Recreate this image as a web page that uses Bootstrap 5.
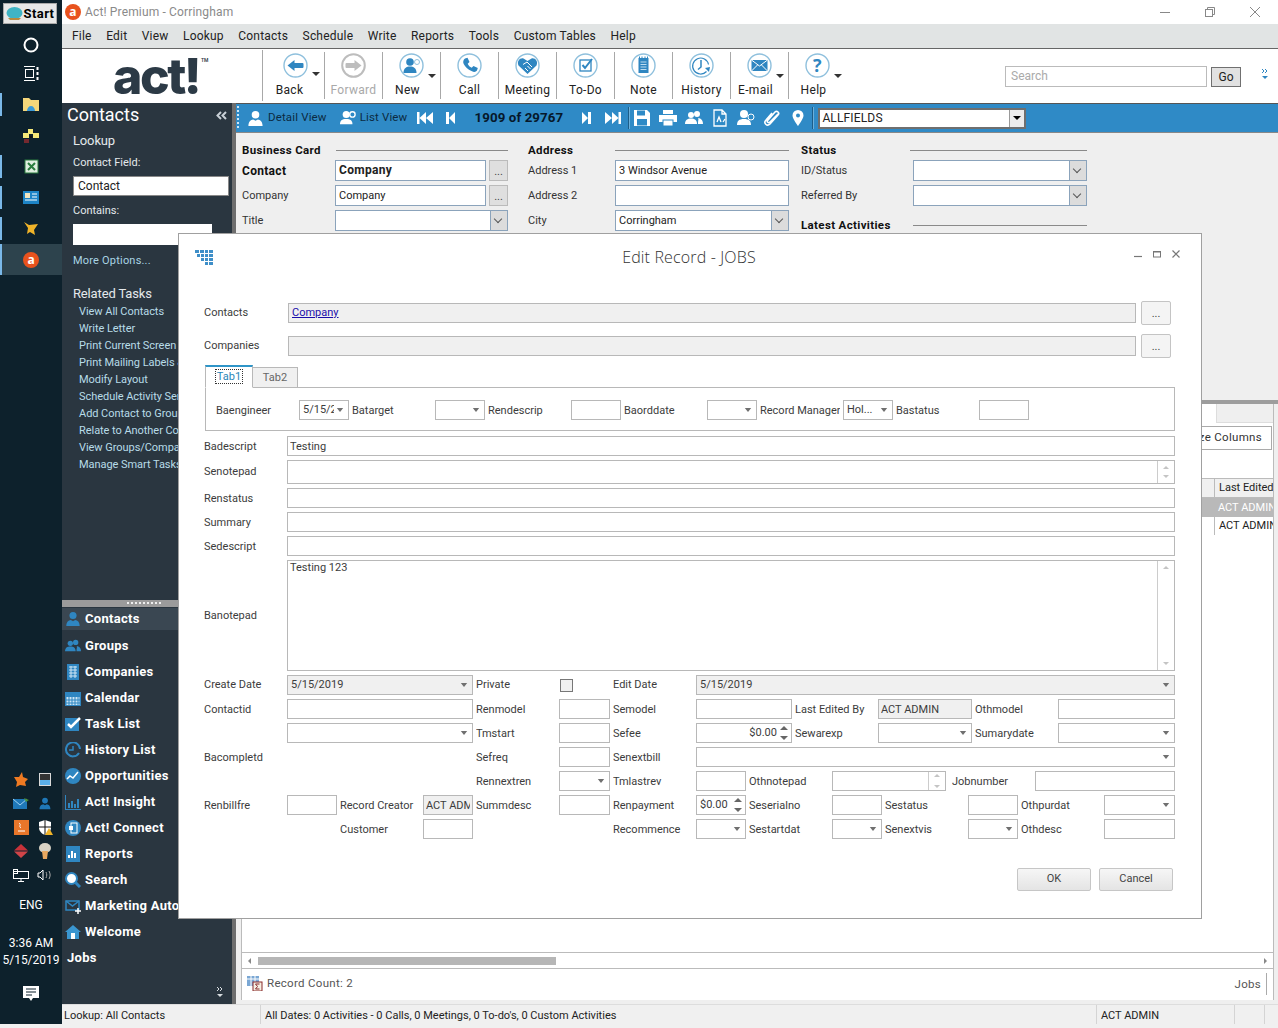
<!DOCTYPE html>
<html lang="en">
  <head>
    <meta charset="UTF-8" />
    <title>Act! Premium - Corringham</title>
    <link href="https://cdn.jsdelivr.net/npm/bootstrap@5.3.3/dist/css/bootstrap.min.css" rel="stylesheet" />
    <style>
      html, body { height: 1024px; }
      body { font-family: Roboto, "Noto Sans", sans-serif; font-size: 11px; color: #3c3c3c; background: #f0f0f0; overflow: hidden; position: relative; }

      /* windows taskbar */
      .taskbar { width: 62px; flex: none; background: #0d212c; color: #fff; }
      .start-btn { margin: 3px 5px 0 3px; height: 21px; padding: 0; font-size: 13px; font-weight: 700; letter-spacing: .4px; color: #000; background: #e8e8e8; border: 1px solid #aaa; border-radius: 0; gap: 1px; }
      .tb-item { height: 31px; position: relative; }
      .tb-first { height: 27px; margin-top: 7px; }
      .tb-item.open::before { content: ""; position: absolute; left: 0; top: 4px; bottom: 4px; width: 2px; background: #7ab8e8; }
      .tb-item.active { background: #2d434d; }
      .tb-item.active::before { top: 0; bottom: 0; }
      .tray { margin-bottom: 9px; }
      .tray-grid { display: grid; grid-template-columns: 24px 24px; grid-auto-rows: 24px; justify-items: center; align-items: center; margin-left: 4px; }
      .tray-text { font-size: 12px; line-height: 17px; }
      .eng { margin: 10px 0 21px; }
      .notif { margin: 17px 0 13px; }

      /* act window chrome */
      .app { min-width: 0; }
      .titlebar { height: 24px; background: #fff; flex: none; color: #8a8a8a; font-size: 12px; letter-spacing: .15px; padding-left: 3px; }
      .win-ctl { gap: 33px; padding-right: 17px; }
      .menubar { height: 25px; flex: none; background: #e1e4e4; border-bottom: 1px solid #666; padding: 0 0 0 10px; font-size: 12px; color: #222; letter-spacing: .2px; gap: 14.500px; }
      .toolbar { height: 54px; flex: none; background: #fff; }
      .logo-slot { width: 200px; flex: none; position: relative; padding-left: 51px; }
      .logo { font-family: Inter, "Liberation Sans", sans-serif; font-weight: 800; font-size: 50px; line-height: 44px; letter-spacing: -2.5px; color: #2c3a46; margin: 0; }
      .logo-tm { position: absolute; left: 139px; top: 9px; font-size: 5px; line-height: 5px; font-weight: 600; color: #2c3a46; }
      .tool { width: 58px; flex: none; position: relative; border-left: 1px solid #a8a8a8; margin: 3px 0 4px; padding-top: 1px; font-size: 12px; color: #222; letter-spacing: .3px; text-align: center; }
      .tool-first { width: 62px; margin: 1px 0 2px; padding-top: 3px; }
      .tool-first svg { left: 2px; position: relative; }
      .tool svg { display: block; margin: 0 auto; width: 25px; height: 25px; }
      .tool div { margin-top: 5px; line-height: 14px; }
      .tool.off { color: #a9a9a9; }
      .tool.drop div { padding-right: 8px; }
      .tool.drop::after { content: ""; position: absolute; right: 4px; top: 22px; border: 4px solid transparent; border-top-color: #333; border-bottom: 0; }
      .search-box { width: 202px; height: 21px; border: 1px solid #bbb; border-radius: 0; padding: 0 5px; font-size: 12px; font-family: inherit; min-height: 0; }
      .search-box::placeholder { color: #aaa; }
      .go-btn { height: 20px; width: 30px; padding: 0; font-size: 12px; background: #e1e1e1; border: 1px solid #707070; border-radius: 0; color: #222; margin: 1px 0 0 4px; }
      .more-btn { margin: 0 9px 6px 20px; }
      .work { min-height: 0; }

      /* left navigation */
      .sidebar { width: 170px; flex: none; background: #2a3640; color: #e4e9ec; overflow: hidden; }
      .side-top { height: 497px; flex: none; white-space: nowrap; padding: 0 3px 0 11px; position: relative; }
      .side-title { font-size: 18px; line-height: 24px; color: #fff; margin: 0 0 4px -6px; display: flex; justify-content: space-between; padding-right: 2px; }
      .side-h { font-size: 13px; line-height: 20px; letter-spacing: -.15px; }
      .side-h.rel { line-height: 22px; margin-bottom: -2px; }
      .side-l { font-size: 11px; line-height: 18px; margin-bottom: -2px; }
      .m3 { margin-top: 3px; } .m6 { margin-top: 6px; } .m7 { margin-top: 7px; } .m15 { margin-top: 15px; }
      .side-input { height: 20px; background: #fff; color: #222; font-size: 12px; padding: 0 4px; line-height: 18px; border: 1px solid #888; }
      .contains { width: 139px; height: 21px; border: 0; }
      .side-link { display: block; color: #b8dce8; font-size: 11px; line-height: 17px; margin-left: 6px; text-decoration: none; letter-spacing: -.05px; }
      .more-opts { color: #a9d4e4; font-size: 11px; letter-spacing: .2px; line-height: 18px; margin-bottom: -2px; }
      .side-split { height: 7px; flex: none; background: #9b9b9b; position: relative; }
      .side-split::after { content: ""; position: absolute; left: 65px; top: 2px; width: 36px; height: 2px; background: repeating-linear-gradient(90deg, #eee 0 2px, transparent 2px 4px); }
      .nav-row { height: 26px; flex: none; padding-left: 3px; font-size: 13px; font-weight: 700; color: #fff; gap: 4px; white-space: nowrap; letter-spacing: .3px; }
      .nav-row.on { background: #3a4752; height: 22px; margin: 1px 0 3px; }
      .nav-row svg { width: 16px; height: 16px; flex: none; }
      .nav-jobs { padding-left: 5px; }
      .side-foot { padding: 0 8px 7px 0; line-height: 8px; }

      /* main view */
      .main-area { min-width: 0; background: #efefef; border-left: 4px solid #6e6e6e; }
      .viewbar { height: 30px; flex: none; background: #2f8ac6; border-top: 1px solid #555; border-bottom: 1px solid #888; color: #0c2a42; font-size: 11.500px; white-space: nowrap; letter-spacing: .15px; }
      .grip { width: 2px; height: 24px; margin: 0 8px 0 1px; background: repeating-linear-gradient(#cfe6f5 0 2px, transparent 2px 4px); }
      .mr13 { margin-right: 13px; } .ml10 { margin-left: 10px; } .ml13 { margin-left: 13px; } .ml14 { margin-left: 14px; } .ml7 { margin-left: 7px; }
      .vb-ico { width: 26px; flex: none; text-align: center; }
      .vb-ico svg { width: 18px; height: 18px; display: block; margin: 0 auto; }
      .vb-sep { width: 2px; height: 22px; background: #1c5d88; border-right: 1px solid #6cb0db; flex: none; margin-right: -1px; }
      .vb-sep2 { margin: 0 0 0 1px; }
      .rec-pos { font-size: 13.300px; font-weight: 700; color: #06182a; width: 127px; flex: none; text-align: center; letter-spacing: .1px; }
      .vb-select { width: 208px; height: 21px; margin-left: 4px; background: #fff; border: 2px solid #6f6f6f; color: #222; padding-left: 2px; line-height: 17px; font-size: 12px; }
      .vb-select i { width: 15px; height: 17px; background: #ececec; border-left: 1px solid #999; position: relative; }
      .vb-select i::after { content: ""; position: absolute; left: 3px; top: 6px; border: 4px solid transparent; border-top-color: #000; border-bottom: 0; }
      .detail { height: 267px; flex: none; padding: 10px 0 0 6px; gap: 20px; overflow: hidden; }
      .d-col { flex: none; }
      .c1 { width: 266px; } .c2 { width: 261px; margin-right: -8px; } .c3 { width: 286px; }
      .d-head { height: 14px; margin-bottom: 1px; font-size: 11.500px; font-weight: 700; color: #111; line-height: 14px; letter-spacing: .35px; }
      .d-head hr { flex: 1; margin: 0; border-top: 1px solid #8a8a8a; opacity: 1; }
      .d-row { height: 25px; font-size: 11px; color: #333; }
      .d-row.strong { font-size: 12px; font-weight: 700; color: #111; letter-spacing: .3px; }
      .d-row label { width: 93px; flex: none; }
      .d-row:not(.strong) label { padding-top: 2px; }
      .c3 .d-row label, .c3 .d-head span { width: 112px; flex: none; }
      .c3 .d-head.status span { width: 109px; }
      .c2 .d-row label, .c2 .d-head span { width: 87px; flex: none; }
      .c1 .d-head span { width: 94px; flex: none; }
      .latest { margin-top: 10px; }
      .d-box { height: 21px; flex: 1; background: #fff; border: 1px solid #8ba3bb; padding: 0 3px; line-height: 19px; min-width: 0; color: #222; }
      .d-box i { width: 17px; height: 19px; margin: 0 -3px 0 auto; background: #dcdcdc; border-left: 1px solid #8ba3bb; display: block; position: relative; }
      .d-box i::after { content: ""; position: absolute; left: 4px; top: 5px; width: 6px; height: 6px; border: solid #555; border-width: 0 1px 1px 0; transform: rotate(45deg); }
      .d-btn { width: 19px; height: 21px; margin-left: 3px; padding: 0; border: 1px solid #bbb; background: #dfdfdf; border-radius: 0; color: #444; font-size: 11px; line-height: 21px; flex: none; }
      .split-h { height: 4px; flex: none; background: #9d9d9d; }
      .grid-panel { background: #fff; margin: 0 4px 0 5px; min-height: 0; border-left: 1px solid #bbb; border-right: 1px solid #bbb; }
      .gp-tabs { height: 19px; flex: none; background: #fff; }
      .gp-tabs div { width: 57px; height: 100%; background: #efefef; border-left: 1px solid #ddd; border-bottom: 1px solid #ddd; }
      .gp-bar { height: 55px; flex: none; padding: 3px 1px 0 0; }
      .cust-btn { width: 120px; height: 24px; border: 1px solid #aaa; background: #fff; font-size: 11.500px; padding: 0 9px 0 0; text-align: right; color: #333; border-radius: 0; letter-spacing: .3px; white-space: nowrap; }
      .gp-table { font-size: 11px; }
      .gp-row { height: 18px; line-height: 18px; color: #222; justify-content: flex-end; white-space: nowrap; overflow: hidden; }
      .gp-row span { width: 59px; flex: none; padding-left: 4px; border-left: 1px solid #bbb; overflow: hidden; }
      .gp-row.head { height: 20px; line-height: 18px; background: #f0f0f0; border-top: 1px solid #bbb; border-bottom: 1px solid #bbb; }
      .gp-row.sel { height: 19px; line-height: 20px; background: #b9b9b9; color: #fff; }
      .gp-row.sel span { border-left: 0; }
      .gp-scroll { height: 17px; flex: none; border-top: 1px solid #bbb; border-bottom: 1px solid #bbb; padding: 0 6px; }
      .gp-scroll b { width: 298px; height: 8px; background: #b6b6b6; margin-left: 7px; display: block; }
      .gp-scroll i { border: 3px solid transparent; }
      .arr-l { border-right-color: #888 !important; border-left: 0 !important; }
      .arr-r { border-left-color: #888 !important; border-right: 0 !important; margin-left: auto; }
      .count-bar { height: 31px; flex: none; padding: 0 6px 2px 5px; color: #555; font-size: 11.500px; letter-spacing: .3px; }
      .count-bar .jobs { border-right: 1px solid #aaa; padding-right: 5px; height: 22px; line-height: 22px; }
      .main-gap { height: 4px; flex: none; }
      .statusbar { height: 20px; flex: none; background: #f0f0f0; border-top: 1px solid #ddd; font-size: 11px; color: #222; white-space: nowrap; }
      .statusbar div { line-height: 21px; padding-left: 4px; border-right: 1px solid #d4d4d4; }
      .s1 { width: 199px; padding-left: 2px !important; } .s2 { width: 836px; } .s3 { width: 138px; } .s4 { width: 30px; }

      /* edit record dialog */
      .edit-dlg { position: absolute; left: 178px; top: 233px; width: 1024px; height: 686px; border-radius: 0; border: 1px solid #a0a0a0; background: #fff; padding: 0 26px 0 25px; }
      .dlg-head { height: 67px; flex: none; position: relative; }
      .dlg-icon { position: absolute; left: -9px; top: 16px; width: 18px; height: 15px; }
      .dlg-title { position: absolute; left: 0; right: 0; top: 12px; text-align: center; font-family: "Open Sans", sans-serif; font-weight: 300; font-size: 16px; line-height: 22px; color: #333; letter-spacing: .15px; padding-right: 1px; }
      .dlg-ctl { position: absolute; right: -5px; top: 16px; gap: 11px; }
      .dlg-row { gap: 3px; flex: none; height: 20px; margin-bottom: 4px; font-size: 11px; color: #3c3c3c; white-space: nowrap; }
      .lb { width: 80px; flex: none; overflow: hidden; line-height: 22px; }
      .lb-wide { width: 81px; }
      .fld { display: block; height: 20px; min-height: 0; padding: 0 2px; border: 1px solid #b8b8b8; border-radius: 0; font-size: 11px; font-family: inherit; color: #3c3c3c; background-color: #fff; flex: none; width: auto; line-height: 18px; resize: none; }
      textarea.fld { min-height: 0; }
      .fld:focus { box-shadow: none; border-color: #b8b8b8; }
      .form-select.fld { padding: 0 14px 0 3px; background-image: url("data:image/svg+xml,%3Csvg xmlns='http://www.w3.org/2000/svg' viewBox='0 0 8 5'%3E%3Cpath d='M0 0h8L4 5z' fill='%23707070'/%3E%3C/svg%3E"); background-position: right 4px center; background-size: 8px 4px; }
      .ro { background-color: #f0f0f0; }
      .grow { flex: 1 1 0; min-width: 0; }
      .f50 { width: 50px; } .f51 { width: 51px; } .f94 { width: 94px; } .f96 { width: 96px; }
      .f114 { width: 114px; flex: none; } .f186 { width: 186px; }
      .s269 { width: 269px; flex: none; }
      .s133 { width: 133px; flex: none; }
      .s134 { width: 134px; flex: none; }
      .s80 { width: 80px; flex: none; }
      .s186 { width: 186px; flex: none; }
      .s51 { width: 51px; flex: none; }
      .job-lb { margin-left: 3px; }
      .dots { width: 30px; height: 24px; padding: 0; border: 1px solid #c4c4c4; border-radius: 2px; background: #f4f4f4; color: #444; font-size: 11px; flex: none; margin: 0 4px 0 2px; line-height: 24px; }
      .pick-row { height: 24px; margin-bottom: 9px; }
      .pick-row .fld { background: #f0f0f0; padding: 0 3px; }
      .pick-row a { color: #1a0dab; }
      .dlg-tabs { margin: -2px 0 0 1px; height: 23px; border-bottom: 1px solid #b8b8b8; font-size: 11px; flex: none; }
      .dlg-tabs .nav-link { padding: 0; border-radius: 0; height: 21px; margin-top: 2px; margin-bottom: -1px; width: 45px; text-align: center; color: #666; background: #f0f0f0; border: 1px solid #b8b8b8; line-height: 20px; border-left: 0; }
      .dlg-tabs .nav-link.active { width: 48px; height: 23px; margin-top: 0; color: #2a86b8; background: #fff; border: 1px solid #b8b8b8; border-top: 2px solid #2f95c8; border-bottom-color: #fff; }
      .dlg-tabs .nav-link.active span { border: 1px dotted #333; padding: 0 1px; }
      .tab-pane-box { margin: 0 0 5px 1px; height: 43px; flex: none; border: 1px solid #b8b8b8; border-top: 0; padding: 12px 0 0 10px; }
      .tall { height: 24px; }
      .tall .fld, .note .fld { height: 100%; }
      .note { height: 111px; }
      .note textarea { padding: 0 2px; line-height: 14px; }
      .vscroll { width: 17px; flex: none; border-left: 1px solid #ccc; position: absolute; right: 1px; top: 1px; bottom: 1px; background: #fff; }
      .vscroll::before, .vscroll::after { content: ""; position: absolute; left: 5px; border: 3px solid transparent; }
      .vscroll::before { top: 5px; border-bottom-color: #c4c4c4; border-top: 0; }
      .vscroll::after { bottom: 5px; border-top-color: #c4c4c4; border-bottom: 0; }
      .f114 .vscroll::before { top: 2px; }
      .f114 .vscroll::after { bottom: 2px; }
      .spin { position: relative; height: 20px; flex: none; border: 1px solid #b8b8b8; background: #fff; padding: 0 14px 0 3px; line-height: 18px; }
      .spin::before, .spin::after { content: ""; position: absolute; right: 3px; border: 4px solid transparent; }
      .spin::before { top: 2px; border-bottom-color: #666; border-top: 0; }
      .spin::after { bottom: 2px; border-top-color: #666; border-bottom: 0; }
      .form-check-input.chk { width: 13px; height: 13px; margin: 0 0 0 1px; border: 1px solid #777; border-radius: 0; background-color: #f0f0f0; flex: none; }
      .dlg-foot { margin-top: 25px; gap: 8px; padding-right: 2px; }
      .dlg-btn { width: 74px; height: 23px; padding: 0; font-size: 11px; color: #444; border: 1px solid #c6c6c6; border-radius: 2px; background: linear-gradient(#f6f6f6, #e4e4e4); }
    </style>
  </head>
  <body class="d-flex">
    <svg width="0" height="0" class="position-absolute">
      <defs>
        <symbol id="ring" viewBox="0 0 25 25"><circle cx="12.500" cy="12.500" r="11.500" fill="#fff" stroke="#8fc0dd" stroke-width="1.400" /></symbol>
        <symbol id="person" viewBox="0 0 18 18"><circle cx="9" cy="5" r="4" /><path d="M1.500 17c0-5 2.500-6.500 5-7l2.500 1.500L11.500 10c2.500.5 5 2 5 7z" /></symbol>
        <symbol id="people" viewBox="0 0 18 18"><circle cx="6" cy="6" r="3" /><path d="M0 15c0-4 2.500-5.500 6-5.500s6 1.500 6 5.500z" /><circle cx="12" cy="5" r="3" /><path d="M13 15h5c0-4-2-5.500-5-6 1 1 0 2 0 6z" /></symbol>
      </defs>
    </svg>

    <aside class="taskbar d-flex flex-column">
      <button class="btn start-btn d-flex align-items-center justify-content-center" type="button">
        <svg width="17" height="13" viewBox="0 0 17 13"><ellipse cx="8.500" cy="6" rx="8" ry="6" fill="#3fb4c4" /><path d="M2 11h13l-2 2H4z" fill="#b88a3e" /></svg>Start
      </button>
      <div class="tb-item tb-first d-flex align-items-center justify-content-center"><svg width="18" height="18" viewBox="0 0 18 18"><circle cx="9" cy="9" r="6.500" fill="none" stroke="#fff" stroke-width="2" /></svg></div>
      <div class="tb-item d-flex align-items-center justify-content-center"><svg width="17" height="17" viewBox="0 0 17 17" fill="none" stroke="#fff"><path d="M1 1.500h11M1 15.500h11" /><rect x="2.500" y="4.500" width="8" height="8" /><path d="M14.500 2v3M14.500 7v3M14.500 12v3" stroke-width="2" /></svg></div>
      <div class="tb-item open d-flex align-items-center justify-content-center"><svg width="18" height="15" viewBox="0 0 18 15"><path d="M1 1h6l2 2h8v11H1z" fill="#f5d77a" /><path d="M5 14c0-3 2-5 4-5s4 2 4 5z" fill="#3a9ad8" /></svg></div>
      <div class="tb-item d-flex align-items-center justify-content-center"><svg width="16" height="14" viewBox="0 0 16 14"><rect x="5" y="0" width="5" height="5" fill="#f5e878" /><rect x="0" y="4" width="6" height="5" fill="#f5e878" /><rect x="10" y="4" width="6" height="5" fill="#f5e878" /><path d="M1 11h5M1 13h5" stroke="#d33" /><rect x="7" y="7" width="2" height="2" fill="#111" /></svg></div>
      <div class="tb-item open d-flex align-items-center justify-content-center"><svg width="15" height="15" viewBox="0 0 15 15"><rect x="1" y="1" width="13" height="13" fill="#dfeee0" stroke="#2a7d3f" /><path d="M4 4l7 7M11 4l-7 7" stroke="#2a7d3f" stroke-width="2" /></svg></div>
      <div class="tb-item open d-flex align-items-center justify-content-center"><svg width="16" height="14" viewBox="0 0 16 14"><rect width="16" height="13" fill="#1d84c6" /><rect x="2" y="2" width="5" height="5" fill="#f1e5c0" /><path d="M9 3h5M9 6h5M2 9h12" stroke="#fff" /></svg></div>
      <div class="tb-item open d-flex align-items-center justify-content-center"><svg width="16" height="15" viewBox="0 0 16 15"><path d="M1 1l5 3 9-1-4 6 1 5-5-3-3 2 1-6z" fill="#f0b429" /></svg></div>
      <div class="tb-item open active d-flex align-items-center justify-content-center"><svg width="16" height="16" viewBox="0 0 16 16"><circle cx="8" cy="8" r="8" fill="#e8521d" /><text x="8" y="12" text-anchor="middle" fill="#fff" font-size="12" font-weight="700" font-family="Open Sans, sans-serif">a</text></svg></div>
      <div class="tray mt-auto d-flex flex-column align-items-center">
        <div class="tray-grid">
          <svg width="16" height="15" viewBox="0 0 16 15"><path d="M1 5l5 0 3-5 1 5 5 2-3 3 1 4-6-1-4 2 1-5z" fill="#ef7a22" /></svg>
          <svg width="12" height="13" viewBox="0 0 12 13"><rect width="12" height="13" fill="#d9d9d9" /><rect x="1" y="1" width="10" height="6" fill="#333" /><rect x="1" y="7" width="10" height="5" fill="#5aaee8" /></svg>
          <svg width="16" height="11" viewBox="0 0 16 11"><rect width="14" height="10" y="1" fill="#1f78b8" /><path d="M0 1l7 6 7-6" stroke="#9fd0ef" fill="none" /><path d="M11 0l5 2-3 2z" fill="#4a8f3a" /></svg>
          <svg width="16" height="13" viewBox="0 0 18 18" fill="#1f78b8"><use href="#person" /></svg>
          <svg width="15" height="15" viewBox="0 0 15 15"><rect width="15" height="15" fill="#e8762a" /><path d="M4 11h7M5 3c3 2-1 3 2 5" stroke="#fff" fill="none" /></svg>
          <svg width="15" height="15" viewBox="0 0 15 15"><path d="M1 2l6-2 6 2v6c0 3-3 6-6 7-3-1-6-4-6-7z" fill="#fff" /><path d="M7 0v15M1 7h12" stroke="#111" /><path d="M11 8l4 7H7z" fill="#f0b429" /></svg>
          <svg width="14" height="14" viewBox="0 0 14 14"><path d="M7 0l7 6.500H0z" fill="#c8323a" /><path d="M0 7.500h14L7 14z" fill="#d04448" /></svg>
          <svg width="12" height="16" viewBox="0 0 12 16"><ellipse cx="6" cy="5" rx="6" ry="5" fill="#d8d2c4" /><path d="M3 8h6l-1 8H4z" fill="#e8a860" /></svg>
          <svg width="16" height="13" viewBox="0 0 16 13" fill="none" stroke="#fff"><rect x=".5" y="2.500" width="15" height="7" /><rect x=".5" y=".5" width="4" height="4" /><path d="M8 9.500v3M5 12.500h6" /></svg>
          <svg width="16" height="12" viewBox="0 0 16 12" fill="none" stroke="#fff"><path d="M1 4h2l3-3v10L3 8H1z" /><path d="M9 3c1 2 1 4 0 6M12 2c1.500 3 1.500 5 0 8" stroke="#aaa" /></svg>
        </div>
        <div class="tray-text eng">ENG</div>
        <div class="tray-text text-center text-nowrap">3:36 AM<br />5/15/2019</div>
        <svg class="notif" width="16" height="16" viewBox="0 0 16 16"><path d="M0 0h16v12h-6l-2 3-2-3H0z" fill="#fff" /><path d="M3 3h10M3 6h10M3 9h6" stroke="#0d212c" /></svg>
      </div>
    </aside>

    <div class="app flex-grow-1 d-flex flex-column">
      <div class="titlebar d-flex align-items-center">
        <svg class="me-1" width="16" height="16" viewBox="0 0 16 16"><circle cx="8" cy="8" r="8" fill="#e8521d" /><text x="8" y="12" text-anchor="middle" fill="#fff" font-size="12" font-weight="700" font-family="Open Sans, sans-serif">a</text></svg>
        <span>Act! Premium - Corringham</span>
        <div class="win-ctl d-flex align-items-center ms-auto">
          <svg width="12" height="12" viewBox="0 0 12 12"><path d="M1 6.500h10" stroke="#888" /></svg>
          <svg width="12" height="12" viewBox="0 0 12 12" fill="none" stroke="#888"><rect x="1.500" y="3.500" width="7" height="7" /><path d="M3.500 3.500v-2h7v7h-2" /></svg>
          <svg width="12" height="12" viewBox="0 0 12 12"><path d="M1 1l10 10M11 1L1 11" stroke="#888" /></svg>
        </div>
      </div>
      <nav class="menubar d-flex align-items-center">
        <span>File</span><span>Edit</span><span>View</span><span>Lookup</span><span>Contacts</span><span>Schedule</span><span>Write</span><span>Reports</span><span>Tools</span><span>Custom Tables</span><span>Help</span>
      </nav>
      <div class="toolbar d-flex align-items-stretch">
        <div class="logo-slot d-flex align-items-center"><p class="logo">act!</p><span class="logo-tm">TM</span></div>
        <div class="tool tool-first drop"><svg viewBox="0 0 25 25"><use href="#ring" /><path d="M4.500 12.500l7-5.500v3h8a1 1 0 0 1 1 1v3a1 1 0 0 1-1 1h-8v3z" fill="#2f86c1" /></svg><div>Back</div></div>
        <div class="tool off"><svg viewBox="0 0 25 25"><circle cx="12.500" cy="12.500" r="11.300" fill="#fff" stroke="#bdbdbd" stroke-width="2" /><path d="M20.500 12.500l-7-5.500v3h-8a1 1 0 0 0-1 1v3a1 1 0 0 0 1 1h8v3z" fill="#bdbdbd" /></svg><div>Forward</div></div>
        <div class="tool drop"><svg viewBox="0 0 25 25"><use href="#ring" /><circle cx="11" cy="9" r="3.800" fill="#2f86c1" /><path d="M4.500 20c0-5 3-6.500 6.500-6.500s6.500 1.500 6.500 6.500z" fill="#2f86c1" /><circle cx="18" cy="9" r="2.500" fill="none" stroke="#8fc0dd" /></svg><div>New</div></div>
        <div class="tool"><svg viewBox="0 0 25 25"><use href="#ring" /><path d="M8 5.500l2.500-.8 2 4.300-1.800 1.800c.8 1.800 2.200 3.200 4 4l1.800-1.800 4.300 2-.8 2.500c-1 1.500-3 1.800-5 .8C10.500 16.300 8.200 14 6.700 11 5.700 9 6.300 6.500 8 5.500z" fill="#2f86c1" /></svg><div>Call</div></div>
        <div class="tool"><svg viewBox="0 0 25 25"><circle cx="12.500" cy="12.500" r="11.500" fill="#fff" stroke="#8fc0dd" stroke-width="1.400" /><path d="M12.500 21L3.500 12.500C1.500 8.500 5 4.500 8.500 5.500l4 2.500 4-2.500c3.500-1 7 3 5 7z" fill="#2f86c1" /><path d="M8 11.500l4-2.500 5 5M10 15l3 3M12.500 13l3 3" stroke="#fff" fill="none" /></svg><div>Meeting</div></div>
        <div class="tool"><svg viewBox="0 0 25 25"><use href="#ring" /><rect x="7" y="7" width="11" height="11" fill="none" stroke="#2f86c1" stroke-width="1.300" /><path d="M9.500 12l2.500 3 7-9" fill="none" stroke="#2f86c1" stroke-width="2" /></svg><div>To-Do</div></div>
        <div class="tool"><svg viewBox="0 0 25 25"><use href="#ring" /><rect x="7.500" y="5" width="10" height="15" fill="#2f86c1" /><path d="M9.500 9h6M9.500 11.500h6M9.500 14h6M9.500 16.500h6" stroke="#bcdcf0" /><path d="M8.500 3.500v3M11 3.500v3M14 3.500v3M16.500 3.500v3" stroke="#2f86c1" /></svg><div>Note</div></div>
        <div class="tool"><svg viewBox="0 0 25 25"><use href="#ring" /><path d="M17.500 18.500a8 8 0 1 1 2-7" fill="none" stroke="#2f86c1" stroke-width="1.200" /><path d="M12 7v7l-3 2.500" fill="none" stroke="#2f86c1" stroke-width="1.500" /><path d="M16 15l5-1-1 5z" fill="#2f86c1" /></svg><div>History</div></div>
        <div class="tool drop"><svg viewBox="0 0 25 25"><use href="#ring" /><rect x="4.500" y="7" width="16" height="11" fill="#2f86c1" /><path d="M4.500 7l8 6 8-6M4.500 18l6-6M20.500 18l-6-6" stroke="#fff" fill="none" /></svg><div>E-mail</div></div>
        <div class="tool drop"><svg viewBox="0 0 25 25"><use href="#ring" /><text x="12.500" y="19" text-anchor="middle" font-size="18" font-weight="700" fill="#2f86c1" font-family="Open Sans, sans-serif">?</text></svg><div>Help</div></div>
        <div class="d-flex align-items-center ms-auto">
          <input class="form-control search-box" type="text" placeholder="Search" />
          <button class="btn go-btn" type="button">Go</button>
          <svg class="more-btn" width="8" height="11" viewBox="0 0 8 11"><path d="M1 1l2 2-2 2M4 1l2 2-2 2" fill="none" stroke="#2f86c1" /><path d="M1 8h6L4 11z" fill="#2f86c1" /></svg>
        </div>
      </div>

      <div class="work d-flex flex-grow-1">
        <aside class="sidebar d-flex flex-column">
          <div class="side-top">
            <div class="side-title">Contacts<svg class="mt-2" width="11" height="9" viewBox="0 0 11 9" fill="none" stroke="#c8d0d6" stroke-width="2"><path d="M5 1L1.500 4.500 5 8M10 1L6.500 4.500 10 8" /></svg></div>
            <div class="side-h">Lookup</div>
            <div class="side-l m3">Contact Field:</div>
            <div class="side-input m6">Contact</div>
            <div class="side-l m6">Contains:</div>
            <div class="side-input contains m6"></div>
            <div class="more-opts m7">More Options...</div>
            <div class="side-h rel m15">Related Tasks</div>
            <a class="side-link">View All Contacts</a>
            <a class="side-link">Write Letter</a>
            <a class="side-link">Print Current Screen</a>
            <a class="side-link">Print Mailing Labels &amp; Envelopes</a>
            <a class="side-link">Modify Layout</a>
            <a class="side-link">Schedule Activity Series</a>
            <a class="side-link">Add Contact to Group</a>
            <a class="side-link">Relate to Another Contact</a>
            <a class="side-link">View Groups/Companies</a>
            <a class="side-link">Manage Smart Tasks</a>
          </div>
          <div class="side-split"></div>
          <div class="nav-row on d-flex align-items-center"><svg fill="#2f86c1"><use href="#person" /></svg>Contacts</div>
          <div class="nav-row d-flex align-items-center"><svg fill="#2f86c1"><use href="#people" /></svg>Groups</div>
          <div class="nav-row d-flex align-items-center"><svg viewBox="0 0 16 16"><rect x="2" y="0" width="12" height="16" fill="#2f86c1" /><path d="M4 3h8M4 6h8M4 9h8M4 12h8M6 2v12M10 2v12" stroke="#cfe6f5" /></svg>Companies</div>
          <div class="nav-row d-flex align-items-center"><svg viewBox="0 0 16 16"><rect x="0" y="2" width="16" height="14" fill="#2f86c1" /><rect x="1.500" y="7" width="13" height="8" fill="#cfe6f5" /><path d="M4 7v8M7 7v8M10 7v8M13 7v8M1 10h14M1 13h14" stroke="#2f86c1" /></svg>Calendar</div>
          <div class="nav-row d-flex align-items-center"><svg viewBox="0 0 16 16"><rect x="0" y="2" width="14" height="13" fill="#2f86c1" /><path d="M3 8l3 3 9-9" fill="none" stroke="#fff" stroke-width="2.500" /></svg>Task List</div>
          <div class="nav-row d-flex align-items-center"><svg viewBox="0 0 16 16" fill="none" stroke="#2f86c1" stroke-width="2"><path d="M14 11a7 7 0 1 1 1-4" /><path d="M8 4v4H4" stroke-width="1.500" /></svg>History List</div>
          <div class="nav-row d-flex align-items-center"><svg viewBox="0 0 16 16"><circle cx="8" cy="8" r="8" fill="#2f86c1" /><path d="M2 11l3-3 3 2 5-6" fill="none" stroke="#fff" stroke-width="1.500" /></svg>Opportunities</div>
          <div class="nav-row d-flex align-items-center"><svg viewBox="0 0 16 16" fill="#2f86c1"><path d="M0 1h1v14h15v1H0z" /><path d="M3 9h2v5H3zM6 7h2v7H6zM9 10h2v4H9zM12 5h2v9h-2z" /></svg>Act! Insight</div>
          <div class="nav-row d-flex align-items-center"><svg viewBox="0 0 16 16"><circle cx="8" cy="8" r="8" fill="#2f86c1" /><rect x="6" y="3" width="6" height="10" fill="none" stroke="#fff" /><rect x="4" y="6" width="4" height="4" fill="#fff" /></svg>Act! Connect</div>
          <div class="nav-row d-flex align-items-center"><svg viewBox="0 0 16 16"><rect x="1" y="0" width="14" height="16" fill="#2f86c1" /><path d="M4 12V9M7 12V5M10 12V7" stroke="#fff" stroke-width="2" /></svg>Reports</div>
          <div class="nav-row d-flex align-items-center"><svg viewBox="0 0 16 16"><circle cx="6.500" cy="6.500" r="5.500" fill="#fff" stroke="#2f86c1" stroke-width="2" /><path d="M10.500 10.500L15 15" stroke="#2f86c1" stroke-width="3" /></svg>Search</div>
          <div class="nav-row d-flex align-items-center"><svg viewBox="0 0 16 16" fill="none" stroke="#2f86c1" stroke-width="1.500"><rect x="1" y="3" width="13" height="9" /><path d="M1 3l6.500 5L14 3" /><path d="M13 10v6M10 13h6" stroke="#fff" /></svg>Marketing Automation</div>
          <div class="nav-row d-flex align-items-center"><svg viewBox="0 0 16 16"><path d="M8 1L0 8h2v7h12V8h2z" fill="#3a96d0" /><rect x="6" y="9" width="4" height="6" fill="#fff" /></svg>Welcome</div>
          <div class="nav-row nav-jobs d-flex align-items-center">Jobs</div>
          <div class="side-foot mt-auto align-self-end text-end">
            <svg width="8" height="11" viewBox="0 0 8 11"><path d="M1 1l2 2-2 2M4 1l2 2-2 2" fill="none" stroke="#d8dde0" /><path d="M1 8h6L4 11z" fill="#d8dde0" /></svg>
          </div>
        </aside>

        <main class="main-area flex-grow-1 d-flex flex-column">
          <div class="viewbar d-flex align-items-center">
            <div class="grip"></div>
            <svg class="me-1" width="17" height="17" fill="#fff"><use href="#person" /></svg><span class="mr13">Detail View</span>
            <svg class="me-1" width="16" height="16" viewBox="0 0 18 18" fill="#fff"><circle cx="7" cy="5" r="4" /><path d="M0 16c0-4 2-6 7-6s7 2 7 6z" /><circle cx="14" cy="5" r="3" fill="none" stroke="#fff" stroke-width="1.500" /></svg><span>List View</span>
            <svg class="ml10" width="16" height="12" viewBox="0 0 16 12" fill="#fff"><path d="M0 0h2.500v12H0zM9 0v12L2.500 6zM16 0v12L9 6z" /></svg>
            <svg class="ml13" width="9" height="12" viewBox="0 0 9 12" fill="#fff"><path d="M0 0h3v12H0zM9 0v12L3 6z" /></svg>
            <div class="rec-pos">1909 of 29767</div>
            <svg width="9" height="12" viewBox="0 0 9 12" fill="#fff"><path d="M9 0H6v12h3zM0 0v12l6-6z" /></svg>
            <svg class="ml14" width="16" height="12" viewBox="0 0 16 12" fill="#fff"><path d="M16 0h-2.500v12H16zM7 0v12l6.500-6zM0 0v12l7-6z" /></svg>
            <div class="vb-sep ml7"></div>
            <div class="vb-ico"><svg viewBox="0 0 18 18" fill="#fff"><path d="M1 1h13l3 3v13H1z" /><rect x="4" y="1.500" width="8" height="5" fill="#2f8ac6" /><rect x="4" y="10" width="10" height="6.500" fill="#2f8ac6" /></svg></div>
            <div class="vb-ico"><svg viewBox="0 0 18 18" fill="#fff"><rect x="4" y="1" width="10" height="4" /><rect x="0" y="6" width="18" height="7" /><rect x="4" y="11" width="10" height="6" stroke="#2f8ac6" /></svg></div>
            <div class="vb-ico"><svg viewBox="0 0 18 18" fill="#fff"><use href="#people" /></svg></div>
            <div class="vb-ico"><svg viewBox="0 0 18 18" fill="none" stroke="#fff" stroke-width="1.300"><path d="M3 1h8l4 4v12H3zM11 1v4h4" /><path d="M6 13l2-5 2 5M12 13l2-3" /></svg></div>
            <div class="vb-ico"><svg viewBox="0 0 18 18" fill="#fff"><circle cx="7" cy="5" r="4" /><path d="M0 16c0-4 2-6 7-6s7 2 7 6z" /><circle cx="14" cy="8" r="3" fill="#2f8ac6" stroke="#fff" /></svg></div>
            <div class="vb-ico"><svg viewBox="0 0 18 18" fill="none" stroke="#fff" stroke-width="1.600"><path d="M15 5l-8 8c-2 2-4-1-2-2l7-8c2-2 5 1 3 3l-8 9c-3 3-7-1-4-4l6-7" /></svg></div>
            <div class="vb-ico"><svg viewBox="0 0 18 18" fill="#fff" fill-rule="evenodd"><path d="M9 1a5.500 5.500 0 0 1 5.500 5.500C14.500 10 9 17 9 17S3.500 10 3.500 6.500A5.500 5.500 0 0 1 9 1zm0 3.500a2 2 0 1 0 0 4 2 2 0 0 0 0-4z" /></svg></div>
            <div class="vb-sep vb-sep2"></div>
            <div class="vb-select d-flex align-items-center justify-content-between">ALLFIELDS<i></i></div>
          </div>

          <div class="detail d-flex">
            <div class="d-col c1">
              <div class="d-head d-flex align-items-center"><span>Business Card</span><hr /></div>
              <div class="d-row strong d-flex align-items-center"><label>Contact</label><div class="d-box">Company</div><button class="btn d-btn" type="button">...</button></div>
              <div class="d-row d-flex align-items-center"><label>Company</label><div class="d-box">Company</div><button class="btn d-btn" type="button">...</button></div>
              <div class="d-row d-flex align-items-center"><label>Title</label><div class="d-box d-flex"><i></i></div></div>
            </div>
            <div class="d-col c2">
              <div class="d-head d-flex align-items-center"><span>Address</span><hr /></div>
              <div class="d-row d-flex align-items-center"><label>Address 1</label><div class="d-box">3 Windsor Avenue</div></div>
              <div class="d-row d-flex align-items-center"><label>Address 2</label><div class="d-box"></div></div>
              <div class="d-row d-flex align-items-center"><label>City</label><div class="d-box d-flex">Corringham<i></i></div></div>
            </div>
            <div class="d-col c3">
              <div class="d-head status d-flex align-items-center"><span>Status</span><hr /></div>
              <div class="d-row d-flex align-items-center"><label>ID/Status</label><div class="d-box d-flex"><i></i></div></div>
              <div class="d-row d-flex align-items-center"><label>Referred By</label><div class="d-box d-flex"><i></i></div></div>
              <div class="d-head latest d-flex align-items-center"><span>Latest Activities</span><hr /></div>
            </div>
          </div>
          <div class="split-h"></div>
          <div class="grid-panel flex-grow-1 d-flex flex-column">
            <div class="gp-tabs d-flex justify-content-end"><div></div></div>
            <div class="gp-bar d-flex justify-content-end"><button class="btn cust-btn" type="button">Customize Columns</button></div>
            <div class="gp-table flex-grow-1">
              <div class="gp-row head d-flex"><span>Last Edited By</span></div>
              <div class="gp-row sel d-flex"><span>ACT ADMIN</span></div>
              <div class="gp-row d-flex"><span>ACT ADMIN</span></div>
            </div>
            <div class="gp-scroll d-flex align-items-center"><i class="arr-l"></i><b></b><i class="arr-r"></i></div>
            <div class="count-bar d-flex align-items-center">
              <svg class="me-1" width="16" height="15" viewBox="0 0 16 15"><rect width="12" height="10" fill="#7aa7d4" /><path d="M0 3h12M4 0v10M8 0v10" stroke="#fff" /><rect x="6" y="6" width="9" height="9" fill="#f4f0e4" stroke="#8a2a2a" /><path d="M12.500 8h-4l2 2.500-2 2.500h4" fill="none" stroke="#8a2a2a" /></svg>
              <span>Record Count: 2</span>
              <span class="jobs ms-auto">Jobs</span>
            </div>
          </div>
          <div class="main-gap"></div>
        </main>
      </div>

      <footer class="statusbar d-flex">
        <div class="s1">Lookup: All Contacts</div>
        <div class="s2">All Dates: 0 Activities - 0 Calls, 0 Meetings, 0 To-do's, 0 Custom Activities</div>
        <div class="s3">ACT ADMIN</div>
        <div class="s4"></div>
      </footer>
    </div>

    <div class="edit-dlg card d-flex flex-column">
      <div class="dlg-head">
        <svg class="dlg-icon" viewBox="0 0 18 15" fill="#3f8fc8"><path d="M0 0h4v3H0zM5 0h4v3H5zM10 0h3v3h-3zM14 0h4v3h-4zM2 4h3v3H2zM6 4h3v3H6zM10 4h3v3h-3zM14 4h4v3h-4zM6 8h3v3H6zM10 8h3v3h-3zM14 8h4v3h-4zM10 12h3v3h-3zM14 12h4v3h-4z" /></svg>
        <div class="dlg-title">Edit Record - JOBS</div>
        <div class="dlg-ctl d-flex align-items-center">
          <svg width="8" height="8" viewBox="0 0 8 8"><path d="M0 6.500h8" stroke="#777" stroke-width="1.200" /></svg>
          <svg width="8" height="8" viewBox="0 0 8 8" fill="none" stroke="#777"><rect x=".5" y="1.500" width="7" height="5.500" /><path d="M0 2h8" /></svg>
          <svg width="8" height="8" viewBox="0 0 8 8"><path d="M.5.500l7 7M7.500.500l-7 7" stroke="#777" stroke-width="1.200" /></svg>
        </div>
      </div>

      <div class="dlg-row pick-row d-flex align-items-center"><div class="lb lb-wide">Contacts</div><div class="fld grow"><a href="#">Company</a></div><button class="btn dots" type="button">...</button></div>
      <div class="dlg-row pick-row d-flex align-items-center"><div class="lb lb-wide">Companies</div><div class="fld grow"></div><button class="btn dots" type="button">...</button></div>

      <ul class="nav nav-tabs dlg-tabs">
        <li class="nav-item"><a class="nav-link active" href="#"><span>Tab1</span></a></li>
        <li class="nav-item"><a class="nav-link" href="#">Tab2</a></li>
      </ul>
      <div class="tab-pane-box">
        <div class="dlg-row d-flex">
          <div class="lb">Baengineer</div><select class="form-select fld f50"><option>5/15/2019</option></select>
          <div class="lb">Batarget</div><select class="form-select fld f50"><option></option></select>
          <div class="lb">Rendescrip</div><input class="form-control fld f50" />
          <div class="lb">Baorddate</div><select class="form-select fld f50"><option></option></select>
          <div class="lb">Record Manager</div><select class="form-select fld f50"><option>Hol...</option></select>
          <div class="lb">Bastatus</div><input class="form-control fld f50" />
        </div>
      </div>

      <div class="dlg-row d-flex"><div class="lb">Badescript</div><input class="form-control fld grow" value="Testing" /></div>
      <div class="dlg-row tall d-flex"><div class="lb align-self-center">Senotepad</div><div class="grow position-relative h-100"><textarea class="form-control fld w-100"></textarea><span class="vscroll"></span></div></div>
      <div class="dlg-row d-flex"><div class="lb">Renstatus</div><input class="form-control fld grow" /></div>
      <div class="dlg-row d-flex"><div class="lb">Summary</div><input class="form-control fld grow" /></div>
      <div class="dlg-row d-flex"><div class="lb">Sedescript</div><input class="form-control fld grow" /></div>
      <div class="dlg-row note d-flex"><div class="lb align-self-center">Banotepad</div><div class="grow position-relative h-100"><textarea class="form-control fld w-100">Testing 123</textarea><span class="vscroll"></span></div></div>

      <div class="dlg-row d-flex align-items-center">
        <div class="lb">Create Date</div><select class="form-select fld f186 ro"><option>5/15/2019</option></select>
        <div class="lb">Private</div><div class="s51 d-flex align-items-center"><input class="form-check-input chk" type="checkbox" /></div>
        <div class="lb">Edit Date</div><select class="form-select fld grow ro"><option>5/15/2019</option></select>
      </div>
      <div class="dlg-row d-flex">
        <div class="lb">Contactid</div><input class="form-control fld f186" />
        <div class="lb">Renmodel</div><input class="form-control fld f51" />
        <div class="lb">Semodel</div><input class="form-control fld f96" />
        <div class="lb">Last Edited By</div><input class="form-control fld f94 ro" value="ACT ADMIN" />
        <div class="lb">Othmodel</div><input class="form-control fld grow" />
      </div>
      <div class="dlg-row d-flex">
        <div class="s80"></div><select class="form-select fld f186"><option></option></select>
        <div class="lb">Tmstart</div><input class="form-control fld f51" />
        <div class="lb">Sefee</div><div class="spin f96 text-end">$0.00</div>
        <div class="lb">Sewarexp</div><select class="form-select fld f94"><option></option></select>
        <div class="lb">Sumarydate</div><select class="form-select fld grow"><option></option></select>
      </div>
      <div class="dlg-row d-flex">
        <div class="lb">Bacompletd</div><div class="s186"></div>
        <div class="lb">Sefreq</div><input class="form-control fld f51" />
        <div class="lb">Senextbill</div><select class="form-select fld grow"><option></option></select>
      </div>
      <div class="dlg-row d-flex">
        <div class="s269"></div>
        <div class="lb">Rennextren</div><select class="form-select fld f51"><option></option></select>
        <div class="lb">Tmlastrev</div><input class="form-control fld f50" />
        <div class="lb">Othnotepad</div><div class="position-relative f114"><input class="form-control fld w-100" /><span class="vscroll"></span></div>
        <div class="lb job-lb">Jobnumber</div><input class="form-control fld grow" />
      </div>
      <div class="dlg-row d-flex">
        <div class="lb">Renbillfre</div><input class="form-control fld f50" />
        <div class="lb">Record Creator</div><input class="form-control fld f50 ro" value="ACT ADMIN" />
        <div class="lb">Summdesc</div><input class="form-control fld f51" />
        <div class="lb">Renpayment</div><div class="spin f50">$0.00</div>
        <div class="lb">Seserialno</div><input class="form-control fld f50" />
        <div class="lb">Sestatus</div><input class="form-control fld f50" />
        <div class="lb">Othpurdat</div><select class="form-select fld grow"><option></option></select>
      </div>
      <div class="dlg-row d-flex">
        <div class="s133"></div>
        <div class="lb">Customer</div><input class="form-control fld f50" />
        <div class="s134"></div>
        <div class="lb">Recommence</div><select class="form-select fld f50"><option></option></select>
        <div class="lb">Sestartdat</div><select class="form-select fld f50"><option></option></select>
        <div class="lb">Senextvis</div><select class="form-select fld f50"><option></option></select>
        <div class="lb">Othdesc</div><input class="form-control fld grow" />
      </div>

      <div class="dlg-foot d-flex justify-content-end">
        <button class="btn dlg-btn" type="button">OK</button>
        <button class="btn dlg-btn" type="button">Cancel</button>
      </div>
    </div>
  </body>
</html>
